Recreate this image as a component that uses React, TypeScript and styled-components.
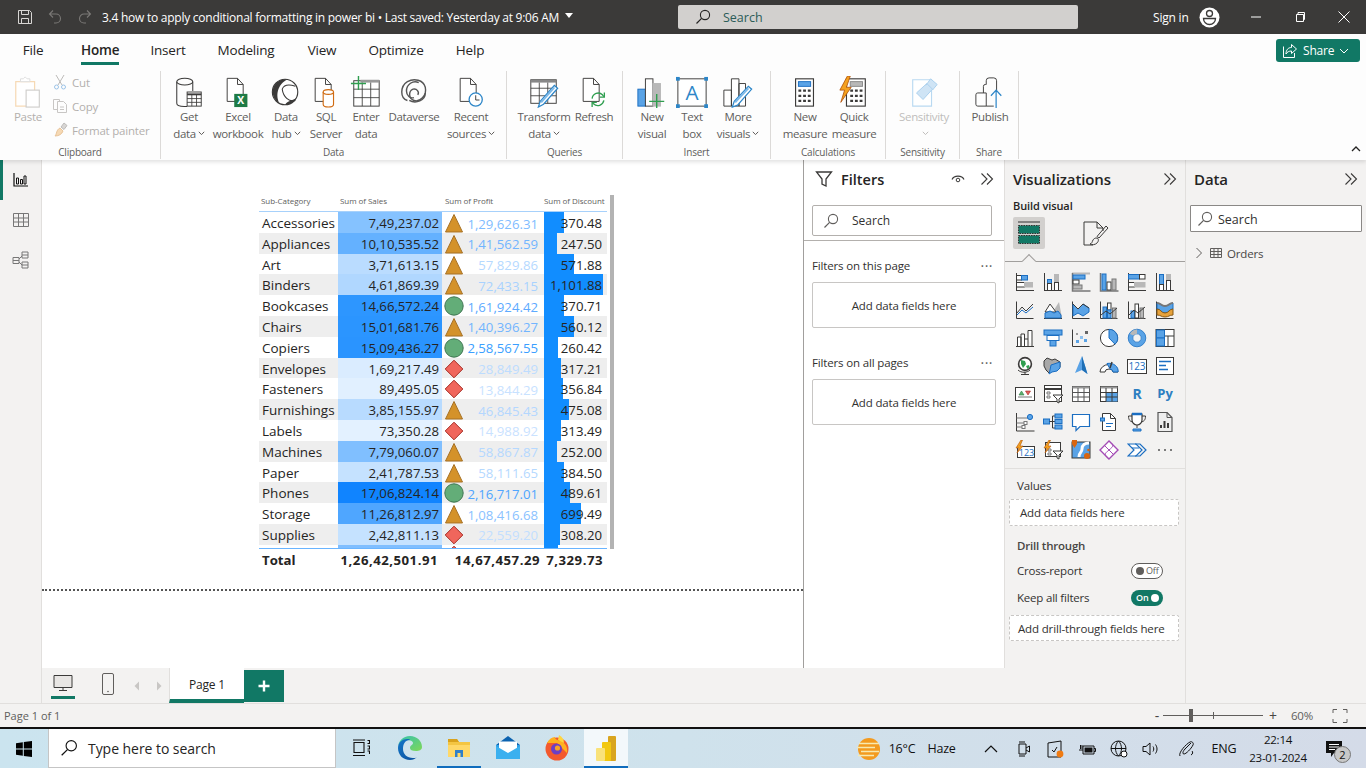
import React from 'react';
import styled, { createGlobalStyle } from 'styled-components';

const FONT = '"Open Sans", "Noto Sans", sans-serif';
const GREEN = '#117865';
const INK = '#3b3a39';
const BLUE = '#5aa3e6';
const BLUE_D = '#1b6ec2';
const GREY = '#b8b8b8';

const GlobalStyle = createGlobalStyle`
  html, body { margin: 0; padding: 0; width: 1366px; height: 768px; overflow: hidden; background: #f3f2f1; }
  * { box-sizing: border-box; }
  body { font-family: ${FONT}; color: #252423; }
`;

type Row = { name: string; sales: string; salesBg: string; mark: 'tri' | 'dot' | 'dia'; profit: string; profitFg: string; discount: number };

const ROWS: Row[] = [
  { name: 'Accessories', sales: '7,49,237.02', salesBg: '#85c2ff', mark: 'tri', profit: '1,29,626.31', profitFg: '#7fbcff', discount: 370.48 },
  { name: 'Appliances', sales: '10,10,535.52', salesBg: '#64b1ff', mark: 'tri', profit: '1,41,562.59', profitFg: '#72b5ff', discount: 247.5 },
  { name: 'Art', sales: '3,71,613.15', salesBg: '#badcff', mark: 'tri', profit: '57,829.86', profitFg: '#b5d9ff', discount: 571.88 },
  { name: 'Binders', sales: '4,61,869.39', salesBg: '#b0d7ff', mark: 'tri', profit: '72,433.15', profitFg: '#a8d2ff', discount: 1101.88 },
  { name: 'Bookcases', sales: '14,66,572.24', salesBg: '#2d96ff', mark: 'dot', profit: '1,61,924.42', profitFg: '#5daaff', discount: 370.71 },
  { name: 'Chairs', sales: '15,01,681.76', salesBg: '#2b95ff', mark: 'tri', profit: '1,40,396.27', profitFg: '#72b5ff', discount: 560.12 },
  { name: 'Copiers', sales: '15,09,436.27', salesBg: '#2a94ff', mark: 'dot', profit: '2,58,567.55', profitFg: '#3b9fff', discount: 260.42 },
  { name: 'Envelopes', sales: '1,69,217.49', salesBg: '#daecff', mark: 'dia', profit: '28,849.49', profitFg: '#bddcff', discount: 317.21 },
  { name: 'Fasteners', sales: '89,495.05', salesBg: '#e1f0ff', mark: 'dia', profit: '13,844.29', profitFg: '#c8e2ff', discount: 356.84 },
  { name: 'Furnishings', sales: '3,85,155.97', salesBg: '#b8dbff', mark: 'tri', profit: '46,845.43', profitFg: '#b4d7ff', discount: 475.08 },
  { name: 'Labels', sales: '73,350.28', salesBg: '#e3f1ff', mark: 'dia', profit: '14,988.92', profitFg: '#c9e2ff', discount: 313.49 },
  { name: 'Machines', sales: '7,79,060.07', salesBg: '#80bfff', mark: 'tri', profit: '58,867.87', profitFg: '#b5d8ff', discount: 252 },
  { name: 'Paper', sales: '2,41,787.53', salesBg: '#c5e2ff', mark: 'tri', profit: '58,111.65', profitFg: '#b5d9ff', discount: 384.5 },
  { name: 'Phones', sales: '17,06,824.14', salesBg: '#1084ff', mark: 'dot', profit: '2,16,717.01', profitFg: '#4fa5ff', discount: 489.61 },
  { name: 'Storage', sales: '11,26,812.97', salesBg: '#4fa6ff', mark: 'tri', profit: '1,08,416.68', profitFg: '#8ac2ff', discount: 699.49 },
  { name: 'Supplies', sales: '2,42,811.13', salesBg: '#c5e2ff', mark: 'dia', profit: '22,559.20', profitFg: '#c2deff', discount: 308.2 },
  // the row under the fold: only its top edge peeks out above the total line
  { name: '', sales: '', salesBg: '#7fbeff', mark: 'dia', profit: '', profitFg: '#c2deff', discount: 258 },
];

const MAX_DISCOUNT = 1101.88;
const BAR_MAX = 58.5;

/* ---------- small svg helpers ---------- */

const Svg = ({ s = 20, vb = '0 0 20 20', children }: { s?: number; vb?: string; children: React.ReactNode }) => (
  <svg width={s} height={s} viewBox={vb} fill="none" style={{ display: 'block', flex: 'none' }}>
    {children}
  </svg>
);

const Chevrons = () => (
  <Svg s={16} vb="0 0 16 16">
    <path d="M2.5 2.5 8 8l-5.5 5.5M8 2.5 13.5 8 8 13.5" stroke={INK} strokeWidth="1.1" />
  </Svg>
);

const Magnifier = ({ color = INK }: { color?: string }) => (
  <Svg s={16} vb="0 0 16 16">
    <circle cx="10" cy="6" r="4.6" stroke={color} strokeWidth="1.1" />
    <path d="M6.6 9.4 1.5 14.5" stroke={color} strokeWidth="1.2" />
  </Svg>
);

const Axes = () => <path d="M1.5 1.5v17h17" stroke={INK} strokeWidth="1" />;

const VIZ_ICONS: React.ReactNode[] = [
  <><path d="M1.5 1v18M1 18.5h18" stroke={INK} /><rect x="1.5" y="3.5" width="5" height="4.5" fill="#fff" stroke={INK} /><rect x="6.5" y="3.5" width="6" height="4.5" fill={BLUE} stroke={BLUE_D} /><rect x="1.5" y="10.5" width="8" height="4.5" fill="#fff" stroke={INK} /><rect x="9.5" y="10.5" width="8" height="4.5" fill={GREY} stroke={GREY} /></>,
  <><path d="M1.5 1v18M1 18.5h18" stroke={INK} /><rect x="4.5" y="7.5" width="4" height="4" fill={BLUE} stroke={BLUE_D} /><rect x="4.5" y="11.5" width="4" height="7" fill="#fff" stroke={INK} /><rect x="11.5" y="2.5" width="4" height="8" fill={GREY} stroke={GREY} /><rect x="11.5" y="10.5" width="4" height="8" fill="#fff" stroke={INK} /></>,
  <><path d="M1 1.5h18" stroke={GREY} strokeWidth="2" /><path d="M1.5 1v18h18" stroke="#777" strokeWidth="1.5" /><rect x="2" y="3" width="12" height="4" fill={BLUE} stroke={BLUE_D} /><rect x="2" y="8" width="6" height="4" fill="#fff" stroke={INK} /><rect x="2" y="13" width="9" height="4" fill={GREY} stroke="#777" /></>,
  <><path d="M1.5 1v18h18" stroke="#777" strokeWidth="1.5" /><rect x="3" y="2" width="4" height="16" fill={BLUE} stroke={BLUE_D} /><rect x="8" y="10" width="4" height="8" fill="#fff" stroke={INK} /><rect x="13" y="7" width="4" height="11" fill={GREY} stroke="#777" /></>,
  <><path d="M1.5 1v18M1 18.5h18" stroke={INK} /><rect x="1.5" y="2.5" width="11" height="4.5" fill={BLUE} stroke={BLUE_D} /><rect x="12.5" y="2.5" width="5.5" height="4.5" fill="#fff" stroke={INK} /><rect x="1.5" y="10.5" width="6" height="4.5" fill="#fff" stroke={INK} /><rect x="7.5" y="10.5" width="10.5" height="4.5" fill={GREY} stroke={GREY} /></>,
  <><path d="M1.5 1v18M1 18.5h18" stroke={INK} /><rect x="4.5" y="2.5" width="4" height="10" fill={BLUE} stroke={BLUE_D} /><rect x="4.5" y="12.5" width="4" height="6" fill="#fff" stroke={INK} /><rect x="11.5" y="2.5" width="4" height="6" fill={GREY} stroke={GREY} /><rect x="11.5" y="8.5" width="4" height="10" fill="#fff" stroke={INK} /></>,

  <><Axes /><path d="M2 13 7 7l4 4 7-7" stroke={INK} /><path d="M2 15l5-5 4 3 7-6" stroke={BLUE_D} /></>,
  <><path d="M1 18.5h18" stroke={INK} /><path d="M11 10l5-8 3 16h-8z" fill={GREY} /><path d="M2 12l5-8 6 8z" fill="#fff" stroke={INK} /><path d="M2 18v-5l5-2 4 2 4-2 3 4v3z" fill={BLUE} stroke={BLUE_D} /></>,
  <><Axes /><path d="M2 4l5 5 5-5 6 4v4l-6 4-5-3-5 3z" fill={BLUE} stroke={BLUE_D} /><path d="M2 4l5 5 5-5 6 4" stroke={INK} /></>,
  <><Axes /><rect x="4" y="7" width="3.5" height="11" fill={BLUE} stroke={BLUE_D} /><rect x="8.5" y="3" width="3.5" height="7" fill="#fff" stroke={INK} /><rect x="8.5" y="10" width="3.5" height="8" fill={BLUE} stroke={BLUE_D} /><rect x="13.5" y="8" width="3.5" height="10" fill={GREY} stroke="#777" /><path d="M2 15l5-4 4 3 7-6" stroke={INK} /></>,
  <><Axes /><rect x="4" y="11" width="3.5" height="7" fill={BLUE} stroke={BLUE_D} /><rect x="8" y="4" width="3.5" height="14" fill="#fff" stroke={INK} /><rect x="13" y="8" width="3.5" height="10" fill={GREY} stroke="#777" /><path d="M2 15l5-5 4 3 7-6" stroke={INK} /></>,
  <><Axes /><path d="M2 3c4 0 4 3 8 3s4-3 8-3v6c-4 0-4 4-8 4s-4-4-8-4z" fill={BLUE} stroke={BLUE_D} /><path d="M2 9c4 0 4 4 8 4s4-4 8-4v6c-4 0-4 2-8 2s-4-2-8-2z" fill="#e6a23c" stroke="#8a5a14" /><path d="M2 3c4 0 4 3 8 3s4-3 8-3" stroke="#777" strokeWidth="2" /></>,

  <><path d="M1 18.5h18" stroke={INK} /><path d="M2.5 18V9H6v9M6 18V6h3.5v12M9.5 18v-7H13v7M13 11V2.5h4V18" stroke={INK} fill="#fff" /></>,
  <><rect x="1" y="2" width="18" height="5" fill={BLUE} stroke={BLUE_D} /><rect x="4" y="7.5" width="12" height="5" fill="#fff" stroke={BLUE_D} /><rect x="7" y="12.5" width="6" height="5.5" fill={BLUE} stroke={BLUE_D} /></>,
  <><Axes /><rect x="5" y="12" width="3" height="3" fill={BLUE} /><rect x="9" y="8" width="3" height="3" fill="#8fc1ee" /><rect x="13" y="11" width="3" height="3" fill={BLUE} /><rect x="14" y="3" width="3" height="3" fill="#666" /><rect x="5" y="5" width="2" height="2" fill="#999" /></>,
  <><circle cx="10" cy="10" r="8.6" fill="#fff" stroke={INK} /><path d="M10 1.400V10l6 6.200A8.600 8.600 0 0 0 10 1.400z" fill={BLUE} stroke={BLUE_D} /></>,
  <><circle cx="10" cy="10" r="6.600" stroke={BLUE} strokeWidth="4.400" /><circle cx="10" cy="10" r="8.800" stroke={BLUE_D} strokeWidth=".8" /><circle cx="10" cy="10" r="4.200" stroke={BLUE_D} strokeWidth=".8" /><path d="M3 6a8 8 0 0 1 7-4.400v4.200A4.200 4.200 0 0 0 6.500 7.600z" fill={GREY} /></>,
  <><rect x="1" y="1.500" width="18" height="17" fill="#fff" stroke={INK} /><rect x="1.500" y="2" width="8" height="8" fill={BLUE} stroke={BLUE_D} /><rect x="1.500" y="10" width="8" height="8" fill={BLUE} stroke={BLUE_D} /><path d="M10 8h9M13 8v10" stroke={INK} /></>,

  <><circle cx="10" cy="8" r="6.400" fill="#fff" stroke={INK} strokeWidth="1.600" /><path d="M6 4l4 1 1 3-3 4-2-4zM11 10l3-1 .5 2-2 2z" fill="#2f9e4f" /><path d="M3 14c3 3 9 3 12 0M10 16v2M6 18.500h8" stroke={INK} /></>,
  <><path d="M1 5l3-3 5 2 3-1 5 3v5l-3 3-5 1-3 2-3-3-2-4z" fill="#a8a8a8" stroke={INK} /><path d="M8 9l9-3v6l-3 3-5 1-3 2 1-4z" fill={BLUE} stroke={BLUE_D} /></>,
  <><path d="M11 0l5.500 18-5.500-4-7 3z" fill={BLUE} /><path d="M11 0l5.500 18-5.500-4z" fill="#1f6fb5" /></>,
  <><path d="M1 16a9 7.500 0 0 1 18 0h-5a4 3 0 0 0-8 0z" fill="#fff" stroke={INK} /><path d="M8 7.500a9 7.500 0 0 1 11 8.500h-5a4 3 0 0 0-3-3z" fill={BLUE} stroke={BLUE_D} /><path d="M11 12l2-6" stroke={INK} strokeWidth="1.500" /></>,
  <><rect x=".5" y="3.500" width="19" height="14" fill="#fff" stroke={INK} /><text x="10" y="14.300" textAnchor="middle" fontSize="10" fontFamily={FONT} fill={BLUE_D}>123</text></>,
  <><rect x="1.500" y="1.500" width="17" height="17" fill="#fff" stroke={INK} /><path d="M4 5.500h12M4 9.500h7M4 13.500h9" stroke={BLUE_D} strokeWidth="1.600" /></>,

  <><rect x=".5" y="3.500" width="19" height="13" fill="#fff" stroke={INK} /><path d="M4 11l2.500-4L9 11z" fill="#60b070" stroke="#2f7d45" strokeWidth=".6" /><path d="M10.500 7l2.500 4 2.500-4z" fill="#e25c5c" stroke="#a62a22" strokeWidth=".6" /><path d="M3 13h14" stroke="#777" /></>,
  <><rect x="1.500" y="1.500" width="17" height="16" fill="#fff" stroke={INK} /><path d="M1.500 5h17" stroke={INK} strokeWidth="2" /><path d="M4 8h3v2H4zM4 12h3v2H4z" stroke="#777" /><path d="M10 11h10l-4 4v4l-2-1v-3z" fill="#fff" stroke={INK} /></>,
  <><rect x="1.500" y="2.500" width="17" height="15" fill="#fff" stroke="#555" /><path d="M1.500 3.500h17" stroke="#999" strokeWidth="2" /><path d="M1.500 8.500h17M1.500 13h17M7 4v13.500M13 4v13.500" stroke="#555" /></>,
  <><rect x="1.500" y="2.500" width="17" height="15" fill="#fff" stroke={INK} /><path d="M1.500 3.500h17" stroke="#999" strokeWidth="2" /><rect x="7" y="8.500" width="11.500" height="9" fill={BLUE} /><path d="M1.500 8.500h17M1.500 13h17M7 4v13.500M13 4v13.500" stroke={INK} /></>,
  <text x="10" y="15" textAnchor="middle" fontSize="14" fontWeight="700" fontFamily={FONT} fill="#2d7fc1">R</text>,
  <text x="10" y="14" textAnchor="middle" fontSize="13" fontWeight="700" fontFamily={FONT} fill="#2d7fc1">Py</text>,

  <><path d="M1.500 1v18h18" stroke={INK} /><path d="M1.500 6H14M1.500 11H9M1.500 15H7" stroke="#777" /><circle cx="15" cy="5" r="2.600" fill={BLUE} stroke={BLUE_D} /><rect x="9" y="9.500" width="3" height="3" fill="#fff" stroke="#777" /><rect x="7" y="13.500" width="3" height="3" fill="#fff" stroke="#777" /></>,
  <><rect x=".5" y="7" width="6" height="5" fill={BLUE} stroke={BLUE_D} /><path d="M6.500 9.500h3M9.500 4v12M9.500 4H12M9.500 9.500H12M9.500 16H12" stroke={INK} /><rect x="12" y="2" width="7" height="4" fill={BLUE} stroke={BLUE_D} /><rect x="12" y="7.500" width="7" height="4" fill={BLUE} stroke={BLUE_D} /><rect x="12" y="13" width="7" height="4" fill={BLUE} stroke={BLUE_D} /></>,
  <path d="M1.500 2.500h17v12H9L5 18.500v-4H1.500z" fill="#fff" stroke={BLUE_D} strokeWidth="1.200" />,
  <><path d="M3.500 1.500h8l5 5v12h-13z" fill="#fff" stroke={INK} /><path d="M11.500 1.500v5h5" stroke={INK} /><rect x="1.500" y="6" width="4" height="3" fill={BLUE} stroke={BLUE_D} /><path d="M7 11.500h7M7 14.500h5" stroke={BLUE_D} /></>,
  <><path d="M5 2h10v6a5 5 0 0 1-10 0z" fill="#fff" stroke={INK} strokeWidth="1.200" /><path d="M5 2h10" stroke={BLUE_D} strokeWidth="2.500" /><path d="M5 4H1.500c0 4 1.500 5.500 4.500 6M15 4h3.500c0 4-1.500 5.500-4.500 6M10 13v3M6 18h8" stroke={INK} /><path d="M6 17h8v2H6z" fill={BLUE} stroke={BLUE_D} /></>,
  <><path d="M3 .5h9l5 5v14H3z" fill="#eee" stroke="#555" strokeWidth="1.200" /><path d="M12 .5v5h5" stroke="#555" /><path d="M6 16v-3M9.500 16V9M13 16v-5" stroke={INK} strokeWidth="2" /></>,

  <><rect x="2.500" y="6.500" width="17" height="11" fill="#fff" stroke={INK} /><text x="11.500" y="15.500" textAnchor="middle" fontSize="9" fontFamily={FONT} fill={BLUE_D}>123</text><path d="M6 0L1 8h3l-2 5 6-7H5l2.500-6z" fill="#f4a11e" stroke="#b3540c" strokeWidth=".6" /></>,
  <><rect x="2.500" y="2.500" width="15" height="14" fill="#fff" stroke={INK} /><path d="M10 11h10l-4 4v4l-2-1v-3z" fill="#fff" stroke={INK} /><path d="M5 9h3v2H5zM5 13h3v2H5z" stroke="#777" /><path d="M6 0L1 8h3l-2 5 6-7H5l2.500-6z" fill="#f4a11e" stroke="#b3540c" strokeWidth=".6" /></>,
  <><rect x="1" y="2" width="18" height="16" fill={BLUE} stroke={INK} /><path d="M8 17c0-5 3-4 3-8s3-6 7-6" stroke="#fff" strokeWidth="3" /><path d="M1 0h5v4L3.500 8 1 4z" fill="#d8650f" /><circle cx="16" cy="16" r="3" fill="#d8650f" /><circle cx="17.500" cy="10" r="1.300" fill="#d8650f" /></>,
  <><path d="M10 1l9 9-9 9-9-9z" fill="#fff" stroke="#a44bb5" strokeWidth="1.400" /><path d="M10 1c5 4 5 5 0 9-5 4-5 5 0 9M5.500 5.500l9 9" stroke="#a44bb5" /></>,
  <><path d="M1 4h8l6 6-6 6H1l6-6z" fill="#fff" stroke={BLUE_D} strokeWidth="1.200" /><path d="M8 4h5l6 6-6 6H8M5 8h7" stroke={BLUE_D} strokeWidth="1.200" /></>,
  <><circle cx="4" cy="10" r="1" fill="#555" /><circle cx="10" cy="10" r="1" fill="#555" /><circle cx="16" cy="10" r="1" fill="#555" /></>,
];

const Page = ({ children }: { children?: React.ReactNode }) => (
  <>
    <path d="M5.500 2.500h11l6 6.500v18h-17z" fill="#fff" stroke={INK} />
    <path d="M16.500 2.500V9h6" stroke={INK} />
    {children}
  </>
);

const RIBBON_ICONS: Record<string, React.ReactNode> = {
  paste: <><rect x="4" y="6" width="20" height="26" fill="#fff" stroke="#f6d9b4" strokeWidth="1.300" /><path d="M9 6V3h3l2-2 2 2h3v3z" fill="#fff" stroke="#ddd" /><rect x="15" y="15" width="14" height="18" fill="#fff" stroke="#cfcdcb" strokeWidth="1.200" /></>,
  getData: <><path d="M4 6v23c0 2 3 3.500 8 3.500h3M21 6v10" stroke={INK} strokeWidth="1.100" /><ellipse cx="12.500" cy="6" rx="8.500" ry="3.500" stroke={INK} strokeWidth="1.100" /><rect x="15" y="17" width="15" height="15" fill="#fff" stroke={INK} /><path d="M15 19.500h15" stroke={INK} strokeWidth="2" /><path d="M15 24h15M15 28h15M20 20v12M25 20v12" stroke={INK} strokeWidth=".9" /></>,
  excel: <><Page /><rect x="13" y="19" width="14" height="14" fill="#1e7b45" /><text x="20" y="30" textAnchor="middle" fontSize="11" fontWeight="700" fontFamily={FONT} fill="#fff">X</text></>,
  hub: <><circle cx="16" cy="17" r="13.500" fill="#fff" stroke={INK} strokeWidth="1.200" /><path d="M16 3.500a13.500 13.500 0 0 0-6 25.500c-4-7-3-20 9-25.500z" fill={INK} /><path d="M27 26C20 28 14 22 13 14c2-5 8-5 14-3" stroke={INK} strokeWidth="1.100" fill="none" /><path d="M16 30.500a13.500 13.500 0 0 0 12-7c-5 3-9 3-12 7z" fill={INK} /></>,
  sql: <><Page /><path d="M14 17v13c0 1.500 2 3 5.500 3s5.500-1.500 5.500-3V17" fill="#fff" stroke="#d06b12" strokeWidth="1.200" /><ellipse cx="19.500" cy="17" rx="5.500" ry="2.500" fill="#fff" stroke="#d06b12" strokeWidth="1.200" /></>,
  enter: <><rect x="4" y="5" width="27" height="27" fill="#fff" stroke={INK} /><path d="M11 5.500h20" stroke="#999" strokeWidth="3" /><path d="M4 14h27M4 23h27M13 7v25M22 7v25" stroke={INK} strokeWidth=".9" /><path d="M9 0v15M1 8h16" stroke="#2f9e4f" strokeWidth="1.500" /></>,
  dataverse: <><path d="M10 26C2 24 2 11 10 6c7-4 17-2 19 6 2 9-6 16-12 14-6-2-6-10-1-12 4-1 7 3 5 6" stroke="#555" strokeWidth="1.500" /><path d="M22 7c-6-3-13 2-13 9 0 5 4 8 8 7M29 18c0 8-10 12-17 8" stroke="#555" strokeWidth="1.500" /></>,
  recent: <><Page /><circle cx="22" cy="25" r="7" fill="#fff" stroke="#2d86c8" strokeWidth="1.400" /><path d="M22 20.500v5h4" stroke={INK} /></>,
  transform: <><rect x="3" y="4" width="27" height="25" fill="#fff" stroke={INK} /><path d="M3 5.500h27" stroke="#888" strokeWidth="3" /><path d="M3 13h27M3 21h27M12 7v22M21 7v22" stroke={INK} strokeWidth=".9" /><path d="M11 33l2-6 15-17 3.500 3-15 17z" fill="#fff" stroke="#2d86c8" strokeWidth="1.300" /><path d="M14 28l14-16" stroke="#7db9e8" strokeWidth="2" /></>,
  refresh: <><Page /><path d="M15 24a6.500 6.500 0 0 1 11-4l1.500 2M27.500 26a6.500 6.500 0 0 1-11 3.500L15 28" stroke="#2f9e4f" strokeWidth="1.400" /><path d="M28 17.500v5h-5M15 33v-5h5" stroke="#2f9e4f" strokeWidth="1.400" /></>,
  newVisual: <><rect x="2" y="14" width="8" height="18" fill={BLUE} stroke={BLUE_D} /><rect x="10" y="3" width="8" height="29" fill="#fff" stroke={INK} /><rect x="18" y="8" width="8" height="24" fill={GREY} stroke={GREY} /><path d="M22 19v16M14 27h16" stroke="#2f9e4f" strokeWidth="1.500" /></>,
  textBox: <><rect x="2" y="3" width="30" height="29" fill="#fff" stroke={INK} /><text x="17" y="26" textAnchor="middle" fontSize="22" fontFamily={FONT} fill="#2d86c8">A</text><rect x="0" y="1" width="4" height="4" fill="#2d86c8" /><rect x="30" y="1" width="4" height="4" fill="#2d86c8" /><rect x="0" y="30" width="4" height="4" fill="#2d86c8" /><rect x="30" y="30" width="4" height="4" fill="#2d86c8" /></>,
  moreVisuals: <><path d="M2 15h8v17H2zM10 3h8v29h-8zM18 8h7v24h-7z" fill="#fff" stroke={INK} /><path d="M11 33l2-6 15-16 3.500 3-15 17z" fill="#fff" stroke="#2d86c8" strokeWidth="1.300" /><path d="M14 28l14-15" stroke="#7db9e8" strokeWidth="2" /></>,
  measure: <><rect x="7" y="3" width="19" height="29" fill="#fff" stroke={INK} strokeWidth="1.200" /><rect x="10" y="6" width="13" height="5" fill={BLUE} stroke={BLUE_D} /><path d="M10 15.500h3M15 15.500h3M20 15.500h3M10 21h3M15 21h3M20 21h3M10 26.500h3M15 26.500h3M20 26.500h3" stroke={INK} strokeWidth="2.400" /></>,
  quick: <><rect x="9" y="3" width="20" height="29" fill="#fff" stroke={INK} strokeWidth="1.200" /><rect x="13" y="6" width="13" height="5" fill={GREY} stroke="#888" /><path d="M13 15.500h3M18 15.500h3M23 15.500h3M13 21h3M18 21h3M23 21h3M13 26.500h3M18 26.500h3M23 26.500h3" stroke={INK} strokeWidth="2.400" /><path d="M10 0 2 15h5L3 28l11-16H9l4-12z" fill="#f4a11e" stroke="#b3540c" strokeWidth=".9" /></>,
  sensitivity: <><path d="M5 4h20v28H5z" fill="#fff" stroke="#b9d9f1" strokeWidth="1.200" /><path d="M9 18 20 8l6 6-10 11zM19 10l5-7 7 6-5 6" fill="#cfe4f5" stroke="#a9cfed" /></>,
  publish: <><path d="M2 20a2 2 0 0 1 2-2h9v14H4a2 2 0 0 1-2-2z" fill="#fff" stroke={INK} /><path d="M10 18v-7a2 2 0 0 1 2-2h1V5a3 3 0 0 1 3-3h5a3 3 0 0 1 3 3v12" stroke={INK} /><path d="M13 32h8" stroke={INK} /><path d="M23.500 34V15M18 21l5.500-6 5.500 6" stroke="#2d86c8" strokeWidth="1.300" /></>,
};

const Icon32 = ({ name }: { name: string }) => (
  <Svg s={32} vb="0 0 34 34">
    {RIBBON_ICONS[name]}
  </Svg>
);

/* ---------- data for the ribbon ---------- */

type Item = { icon: string; w: number; l1: string; l2?: string; more?: boolean; off?: boolean };

const GROUPS: { label: string; w: number; pl: number; items: Item[] }[] = [
  { label: 'Data', w: 346, pl: 4, items: [
    { icon: 'getData', w: 48, l1: 'Get', l2: 'data', more: true },
    { icon: 'excel', w: 50, l1: 'Excel', l2: 'workbook' },
    { icon: 'hub', w: 46, l1: 'Data', l2: 'hub', more: true },
    { icon: 'sql', w: 34, l1: 'SQL', l2: 'Server' },
    { icon: 'enter', w: 46, l1: 'Enter', l2: 'data' },
    { icon: 'dataverse', w: 50, l1: 'Dataverse' },
    { icon: 'recent', w: 64, l1: 'Recent', l2: 'sources', more: true },
  ] },
  { label: 'Queries', w: 116, pl: 9, items: [
    { icon: 'transform', w: 56, l1: 'Transform', l2: 'data', more: true },
    { icon: 'refresh', w: 44, l1: 'Refresh' },
  ] },
  { label: 'Insert', w: 148, pl: 9, items: [
    { icon: 'newVisual', w: 40, l1: 'New', l2: 'visual' },
    { icon: 'textBox', w: 40, l1: 'Text', l2: 'box' },
    { icon: 'moreVisuals', w: 52, l1: 'More', l2: 'visuals', more: true },
  ] },
  { label: 'Calculations', w: 115, pl: 9, items: [
    { icon: 'measure', w: 50, l1: 'New', l2: 'measure' },
    { icon: 'quick', w: 48, l1: 'Quick', l2: 'measure' },
  ] },
  { label: 'Sensitivity', w: 74, pl: 3, items: [
    { icon: 'sensitivity', w: 70, l1: 'Sensitivity', more: true, off: true },
  ] },
  { label: 'Share', w: 59, pl: 4, items: [
    { icon: 'publish', w: 52, l1: 'Publish' },
  ] },
];

const Caret = () => (
  <svg width="7" height="5" viewBox="0 0 7 5" fill="none" style={{ marginLeft: 2 }}>
    <path d="M.8.8 3.500 3.600 6.200.8" stroke="currentColor" strokeWidth="1" />
  </svg>
);

const Mark = ({ kind }: { kind: Row['mark'] }) => {
  if (kind === 'tri') {
    return <Svg s={20}><path d="M10 1.500 18.500 19h-17z" fill="#d4922a" stroke="#a67125" /></Svg>;
  }
  if (kind === 'dot') {
    return <Svg s={20}><circle cx="10" cy="10" r="9.200" fill="#63ad78" stroke="#3f7552" /></Svg>;
  }
  return <Svg s={20}><path d="M10 1.200 18.800 10 10 18.800 1.200 10z" fill="#f0665c" stroke="#a62a22" /></Svg>;
};

const App = () => {
  return (
    <>
      <GlobalStyle />
      <Shell>
        <TitleBar>
          <TitleLeft>
            <Svg s={16} vb="0 0 16 16">
              <path d="M1.500 1.500h11l2 2v11h-13z" stroke="#d8d6d4" />
              <path d="M4.500 1.500v4h7v-4M4.500 14.500v-5h7v5" stroke="#d8d6d4" />
            </Svg>
            <TitleGhost>
              <Svg s={16} vb="0 0 16 16"><path d="M6 1.500 2.500 5 6 8.500M3 5h6a4.500 4.500 0 0 1 0 9H7" stroke="#7a7876" strokeWidth="1.100" /></Svg>
            </TitleGhost>
            <TitleGhost>
              <Svg s={16} vb="0 0 16 16"><path d="M10 1.500 13.500 5 10 8.500M13 5H7a4.500 4.500 0 0 0 0 9h2" stroke="#7a7876" strokeWidth="1.100" /></Svg>
            </TitleGhost>
            <DocTitle>3.4 how to apply conditional formatting in power bi • Last saved: Yesterday at 9:06 AM</DocTitle>
            <TitleCaret />
          </TitleLeft>
          <TitleSearch>
            <Magnifier color="#252423" />
            <span>Search</span>
          </TitleSearch>
          <TitleRight>
            <SignIn>Sign in</SignIn>
            <Svg s={21} vb="0 0 21 21">
              <circle cx="10.500" cy="10.500" r="10" fill="#fff" />
              <circle cx="10.500" cy="6.500" r="3" stroke={INK} strokeWidth="1.300" />
              <path d="M4.500 11.500h12a6 6 0 0 1-12 0z" stroke={INK} strokeWidth="1.300" />
            </Svg>
            <WinButton $ml={30}><Svg s={12} vb="0 0 12 12"><path d="M1 6h10" stroke="#fff" /></Svg></WinButton>
            <WinButton $ml={32}><Svg s={12} vb="0 0 12 12"><path d="M2.500 3.500h7v7h-7zM4 3.500v-2h6.500v7h-1" stroke="#fff" /></Svg></WinButton>
            <WinButton $ml={32}><Svg s={12} vb="0 0 12 12"><path d="m.5.500 11 11m0-11-11 11" stroke="#fff" /></Svg></WinButton>
          </TitleRight>
        </TitleBar>

        <Ribbon>
          <TabsRow>
            <Tab $w={44} $ml={11}>File</Tab>
            <Tab $w={38} $ml={26} $active>Home</Tab>
            <Tab $w={36} $ml={31}>Insert</Tab>
            <Tab $w={60} $ml={30}>Modeling</Tab>
            <Tab $w={32} $ml={30}>View</Tab>
            <Tab $w={58} $ml={29}>Optimize</Tab>
            <Tab $w={30} $ml={30}>Help</Tab>
            <ShareButton>
              <Svg s={16} vb="0 0 16 16">
                <path d="M1.500 3.500v11h11V10" stroke="#fff" />
                <path d="M9.500 1.500 14.500 6l-5 4.500V8C7 8 5 9 4 11c0-4 2-6.500 5.500-6.500z" stroke="#fff" />
              </Svg>
              <span>Share</span>
              <Svg s={10} vb="0 0 10 10"><path d="m1 3 4 4 4-4" stroke="#fff" /></Svg>
            </ShareButton>
          </TabsRow>
          <Groups>
            <RibbonGroup $w={161} $pl={0}>
              <GroupItems>
                <PasteButton>
                  <Icon32 name="paste" />
                  <span>Paste</span>
                </PasteButton>
                <ClipList>
                  <ClipRow>
                    <Svg s={16} vb="0 0 16 16"><path d="M4 1l6 10M12 1 6 11" stroke="#bdbbb9" /><circle cx="4.500" cy="13" r="2" stroke="#9cc4e8" /><circle cx="11.500" cy="13" r="2" stroke="#9cc4e8" /></Svg>
                    Cut
                  </ClipRow>
                  <ClipRow>
                    <Svg s={16} vb="0 0 16 16"><path d="M5.500 3.500h6l3 3v8h-9zM5 11.500H1.500v-10h6v2M8 9h4M8 11.500h4" stroke="#c8c6c4" /></Svg>
                    Copy
                  </ClipRow>
                  <ClipRow>
                    <Svg s={16} vb="0 0 16 16"><path d="m8 6 3 3c-1 3-4 5-8 5 2-2 1-6 5-8z" fill="#f6d9b4" stroke="#e8c49a" /><path d="m9 5 3-4 3 2.500-3 4z" fill="#d8d6d4" stroke="#bdbbb9" /></Svg>
                    Format painter
                  </ClipRow>
                </ClipList>
              </GroupItems>
              <GroupLabel $pl={0}>Clipboard</GroupLabel>
            </RibbonGroup>
            {GROUPS.map((g) => (
              <RibbonGroup key={g.label} $w={g.w} $pl={g.pl}>
                <GroupItems>
                  {g.items.map((it) => (
                    <RibbonItem key={it.icon} $w={it.w} $off={it.off}>
                      <Icon32 name={it.icon} />
                      <ItemLabel>
                        <span>{it.l1}</span>
                        <span>
                          {it.l2}
                          {it.more && <Caret />}
                        </span>
                      </ItemLabel>
                    </RibbonItem>
                  ))}
                </GroupItems>
                <GroupLabel $pl={g.pl}>{g.label}</GroupLabel>
              </RibbonGroup>
            ))}
            <Collapse>
              <Svg s={10} vb="0 0 10 10"><path d="m1 7 4-4 4 4" stroke="#252423" strokeWidth="1.300" /></Svg>
            </Collapse>
          </Groups>
        </Ribbon>

        <Main>
          <NavRail>
            <NavItem $active>
              <Svg s={16} vb="0 0 16 16"><path d="M1 1v13h14" stroke="#111" strokeWidth="1.200" /><path d="M3.500 6h2v6h-2zM7.500 7.500h2V12h-2zM11 4h2v8h-2z" stroke="#111" /></Svg>
            </NavItem>
            <NavItem>
              <Svg s={16} vb="0 0 16 16"><path d="M.5 1.500h15v13H.5zM.5 6h15M.5 10h15M5.500 1.500v13M10.500 1.500v13" stroke="#777" /></Svg>
            </NavItem>
            <NavItem>
              <Svg s={18} vb="0 0 18 18"><path d="M1 6.500h6v6H1zM1 9.500h6M10 1h6v6h-6zM10 4h6M10 11h6v6h-6zM10 14h6M7 8l3-3M7 11l3 3" stroke="#777" /></Svg>
            </NavItem>
          </NavRail>

          <Center>
            <Workspace>
              <Canvas>
                <ReportPage>
                  <TableVisual>
                    <Table>
                      <HeaderRow>
                        <HeadCell>Sub-Category</HeadCell>
                        <HeadCell>Sum of Sales</HeadCell>
                        <HeadCell>Sum of Profit</HeadCell>
                        <HeadCell>Sum of Discount</HeadCell>
                      </HeaderRow>
                      <TableBody>
                        {ROWS.map((r, i) => (
                          <DataRow key={i} $odd={i % 2 === 1}>
                            <NameCell>{r.name}</NameCell>
                            <SalesCell $bg={r.salesBg}>{r.sales}</SalesCell>
                            <ProfitCell $fg={r.profitFg}>
                              <Mark kind={r.mark} />
                              <span>{r.profit}</span>
                            </ProfitCell>
                            <DiscountCell>
                              <DiscountBar style={{ width: (r.discount / MAX_DISCOUNT) * BAR_MAX }} />
                              {r.name && (
                                <DiscountValue>{r.discount.toLocaleString('en-US', { minimumFractionDigits: 2 })}</DiscountValue>
                              )}
                            </DiscountCell>
                          </DataRow>
                        ))}
                      </TableBody>
                      <TotalRow>
                        <TotalCell $left>Total</TotalCell>
                        <TotalCell>1,26,42,501.91</TotalCell>
                        <TotalCell>14,67,457.29</TotalCell>
                        <TotalCell>7,329.73</TotalCell>
                      </TotalRow>
                    </Table>
                    <ScrollBar />
                  </TableVisual>
                </ReportPage>
              </Canvas>

              <FiltersPanel>
                <PanelHead>
                  <Svg s={18} vb="0 0 18 18"><path d="M1.500 2h15L11 9v7l-4-2V9z" stroke={INK} strokeWidth="1.300" /></Svg>
                  <FilterTitle>Filters</FilterTitle>
                  <HeadIcons>
                    <Svg s={14} vb="0 0 14 14"><path d="M1 7.500C3 3 11 3 13 7.500" stroke={INK} strokeWidth="1.100" /><circle cx="7" cy="8" r="1.800" stroke={INK} /></Svg>
                    <Chevrons />
                  </HeadIcons>
                </PanelHead>
                <FilterSearch>
                  <Magnifier color="#605e5c" />
                  <span>Search</span>
                </FilterSearch>
                <FilterDivider />
                <FilterSection>
                  <FilterLabel>
                    <span>Filters on this page</span>
                    <Dots>···</Dots>
                  </FilterLabel>
                  <DropBox>Add data fields here</DropBox>
                </FilterSection>
                <FilterSection>
                  <FilterLabel>
                    <span>Filters on all pages</span>
                    <Dots>···</Dots>
                  </FilterLabel>
                  <DropBox>Add data fields here</DropBox>
                </FilterSection>
              </FiltersPanel>
            </Workspace>

            <PageTabs>
              <ViewIcon $active>
                <Svg s={20} vb="0 0 20 20"><path d="M10 14.500v3M6 17.500h8" stroke={INK} /><path d="M1 2.500h18v12H1z" fill="#e8e6e4" stroke={INK} /></Svg>
              </ViewIcon>
              <ViewIcon>
                <Svg s={22} vb="0 0 22 22"><rect x="5.500" y=".5" width="11" height="21" rx="1.500" stroke="#605e5c" /><circle cx="11" cy="18.500" r=".8" fill="#605e5c" /></Svg>
              </ViewIcon>
              <PageArrows>
                <Svg s={10} vb="0 0 10 10"><path d="M7 .5v9L2.500 5z" fill="#c8c6c4" /></Svg>
                <Svg s={10} vb="0 0 10 10"><path d="M3 .5v9L7.500 5z" fill="#c8c6c4" /></Svg>
              </PageArrows>
              <PageTab>Page 1</PageTab>
              <AddPage>
                <Svg s={12} vb="0 0 12 12"><path d="M6 .5v11M.5 6h11" stroke="#fff" strokeWidth="2.400" /></Svg>
              </AddPage>
            </PageTabs>
          </Center>

          <VizPanel>
            <PaneTitle>
              Visualizations
              <Chevrons />
            </PaneTitle>
            <BuildLabel>Build visual</BuildLabel>
            <BuildTabs>
              <BuildTab $active>
                <Svg s={28} vb="0 0 28 28">
                  <path d="M3 3h22" stroke="#333" />
                  <rect x="3.500" y="6.500" width="21" height="8" fill={GREEN} stroke="#333" strokeDasharray="1.500 1" />
                  <rect x="3.500" y="16.500" width="21" height="8" fill={GREEN} stroke="#333" strokeDasharray="1.500 1" />
                </Svg>
              </BuildTab>
              <BuildTab>
                <Svg s={28} vb="0 0 28 28">
                  <path d="M12 26H3V3h13l6 6v3M16 3v6h6" stroke={INK} />
                  <path d="m27 9-9 10-2-1.500L25 7zM15 19c3 0 3 3 1 5s-5 2-7 1c2-.5 2-2 3-4 .5-1 2-2 3-2z" stroke={INK} />
                </Svg>
              </BuildTab>
            </BuildTabs>
            <NotchLine />
            <VizGrid>
              {VIZ_ICONS.map((icon, i) => (
                <VizCell key={i}>
                  <Svg s={20}>{icon}</Svg>
                </VizCell>
              ))}
            </VizGrid>
            <VizDivider />
            <WellLabel>Values</WellLabel>
            <DashedBox $h={27} $pl={10}>Add data fields here</DashedBox>
            <DrillLabel>Drill through</DrillLabel>
            <ToggleRow>
              <span>Cross-report</span>
              <ToggleOff>
                <Knob $dark />
                <span>Off</span>
              </ToggleOff>
            </ToggleRow>
            <ToggleRow>
              <span>Keep all filters</span>
              <ToggleOn>
                <span>On</span>
                <Knob />
              </ToggleOn>
            </ToggleRow>
            <DashedBox $h={26} $pl={8} $mt={4}>Add drill-through fields here</DashedBox>
          </VizPanel>

          <DataPanel>
            <PaneTitle>
              Data
              <Chevrons />
            </PaneTitle>
            <DataSearch>
              <Magnifier color="#605e5c" />
              <span>Search</span>
            </DataSearch>
            <TreeRow>
              <Svg s={12} vb="0 0 12 12"><path d="m3.500 1 5 5-5 5" stroke="#605e5c" /></Svg>
              <Svg s={12} vb="0 0 12 12"><path d="M.5 1.500h11v9H.5zM.5 4.500h11M.5 7.500h11M4 1.500v9M8 1.500v9" stroke="#605e5c" /></Svg>
              <span>Orders</span>
            </TreeRow>
          </DataPanel>
        </Main>

        <StatusBar>
          <span>Page 1 of 1</span>
          <ZoomArea>
            <ZoomSign>-</ZoomSign>
            <ZoomTrack>
              <ZoomTick />
              <ZoomThumb />
            </ZoomTrack>
            <ZoomSign>+</ZoomSign>
            <ZoomValue>60%</ZoomValue>
            <Svg s={16} vb="0 0 16 16"><path d="M1 5V1.500h4M11 1.500h4V5M15 11v3.500h-4M5 14.500H1V11" stroke="#605e5c" /></Svg>
          </ZoomArea>
        </StatusBar>

        <Taskbar>
          <StartButton>
            <Svg s={18} vb="0 0 18 18"><path d="M1 3.200 7.800 2.200v6.300H1zM8.800 2 17 1v7.500H8.800zM1 9.500h6.800v6.300L1 14.800zM8.800 9.500H17V17l-8.200-1.100z" fill="#000" /></Svg>
          </StartButton>
          <TaskSearch>
            <Svg s={18} vb="0 0 16 16"><circle cx="10" cy="6" r="4.600" stroke="#111" strokeWidth="1" /><path d="M6.600 9.400 1.500 14.500" stroke="#111" strokeWidth="1.100" /></Svg>
            <span>Type here to search</span>
          </TaskSearch>
          <TaskApp>
            <Svg s={18} vb="0 0 18 18"><path d="M2 3.500h10v10H2zM1 1h12M1 16.500h12M15.500 1.500h2v3h-2M15.500 7h2v3h-2M15.500 12h2v3" stroke="#111" strokeWidth="1.100" /></Svg>
          </TaskApp>
          <TaskApp>
            <Svg s={26} vb="0 0 26 26">
              <defs>
                <linearGradient id="edgeA" x1="0" y1="0" x2="1" y2="1"><stop offset="0" stopColor="#35c1b0" /><stop offset="1" stopColor="#7fd857" /></linearGradient>
                <linearGradient id="edgeB" x1="0" y1="0" x2="1" y2="1"><stop offset="0" stopColor="#1477c8" /><stop offset="1" stopColor="#0b4f9c" /></linearGradient>
              </defs>
              <path d="M1 13C1 6 6 1 13 1s12 5 12 11c0 3-3 4-6 4-4 0-6-1-6-3 0-3 3-3 3-5 0-2-3-3-6-3C7 5 1 7 1 13z" fill="url(#edgeA)" />
              <path d="M1 13c0-6 5-9 9-9 2 0 3 .5 3 1-5 0-7 4-7 9 0 5 4 9 10 9 2 0 3 0 4-1-2 2-4 3-7 3C6 25 1 20 1 13z" fill="url(#edgeB)" />
            </Svg>
          </TaskApp>
          <TaskApp $underline>
            <Svg s={24} vb="0 0 24 24">
              <path d="M1 3h9l2 3h11v15H1z" fill="#f4c542" />
              <path d="M1 3h9l2 3H1z" fill="#d9a21c" />
              <path d="M1 9h22v12H1z" fill="#ffd868" />
              <path d="M8 14h8v7h-2.500v-4h-3v4H8z" fill="#2f7fc9" />
            </Svg>
          </TaskApp>
          <TaskApp>
            <Svg s={26} vb="0 0 26 26">
              <path d="M1 10 13 1l12 9v14H1z" fill="#0c63b0" />
              <path d="M1 10h24v14H1z" fill="#2d9fe6" />
              <path d="M4 6.500h18v8l-9 5-9-5z" fill="#fff" />
              <path d="M1 11l12 7 12-7v13H1z" fill="#3bb0ef" />
            </Svg>
          </TaskApp>
          <TaskApp>
            <Svg s={26} vb="0 0 26 26">
              <circle cx="13" cy="14" r="11.500" fill="#f3592e" />
              <path d="M3 8c2-4 5-6 8-6 0 3 3 3 6 4 4 2 7 6 6 12L13 8z" fill="#ffb11e" />
              <path d="M15 0c3 2 5 4 5 8l-6-3z" fill="#ffd53d" />
              <circle cx="12.500" cy="14" r="5.500" fill="#6d3fc4" />
              <circle cx="13.500" cy="13" r="2.600" fill="#f7a12a" />
            </Svg>
          </TaskApp>
          <TaskApp $underline $active>
            <Svg s={26} vb="0 0 26 26">
              <rect x="15" y="1" width="8" height="25" rx="1" fill="#d9a51f" />
              <rect x="9" y="7" width="9" height="19" rx="1" fill="#f2c811" />
              <rect x="3" y="13" width="9" height="13" rx="1" fill="#f9e27a" />
            </Svg>
          </TaskApp>

          <Tray>
            <TraySlot $w={30}>
              <Svg s={24} vb="0 0 24 24">
                <circle cx="13" cy="12" r="11" fill="#f39a1f" />
                <path d="M3 6.500h20M1 10.500h18M5 14.500h18M2 18.500h16" stroke="#f7e9b0" strokeWidth="1.500" />
              </Svg>
            </TraySlot>
            <TrayText $w={38}>16°C</TrayText>
            <TrayText $w={41}>Haze</TrayText>
            <TraySpacer $w={13} />
            <TraySlot $w={32}><Svg s={14} vb="0 0 14 14"><path d="m1 10 6-6 6 6" stroke="#111" strokeWidth="1.200" /></Svg></TraySlot>
            <TraySlot $w={33}><Svg s={16} vb="0 0 16 16"><path d="M3 3h7v10H3zM10 7l3.500-2v6L10 9M3 1h6M3 15h6" stroke="#111" /></Svg></TraySlot>
            <TraySlot $w={31}>
              <Svg s={20} vb="0 0 20 20"><path d="M2 4l13-2v16H2zM6 11l2 2 3-5" stroke="#111" /><circle cx="14" cy="15" r="3.400" fill="#f07b12" /></Svg>
            </TraySlot>
            <TraySlot $w={32}><Svg s={18} vb="0 0 18 18"><path d="M5 6h11v8H5zM16 8.500h1.500v3H16M1 10h4M2.500 5v4M4 5v4" stroke="#111" /><path d="M6.500 7.500h8v5h-8z" fill="#111" /></Svg></TraySlot>
            <TraySlot $w={32}><Svg s={18} vb="0 0 18 18"><circle cx="8.500" cy="8.500" r="7.500" stroke="#111" /><path d="M1 8.500h15M8.500 1c-4 4-4 11 0 15M8.500 1c4 4 4 11 0 15" stroke="#111" /><circle cx="14" cy="14" r="3" fill="#fff" stroke="#111" /></Svg></TraySlot>
            <TraySlot $w={31}><Svg s={18} vb="0 0 18 18"><path d="M1 6.500h3L8 3v12l-4-3.500H1zM11 6.500c1 1.500 1 3.500 0 5M13.500 4.500c2 3 2 6 0 9" stroke="#111" /></Svg></TraySlot>
            <TraySlot $w={38} $pl={4}><Svg s={20} vb="0 0 20 20"><path d="M3 17c-2-3 6-12 10-14 2-1 4 1 3 3-2 4-7 9-9 9-2 0-1-3 1-5l6-6M15 12c1 1 1 3-1 4" stroke="#111" /></Svg></TraySlot>
            <TrayText $w={40}>ENG</TrayText>
            <Clock>
              <span>22:14</span>
              <span>23-01-2024</span>
            </Clock>
            <NotifySlot>
              <Svg s={18} vb="0 0 18 18"><path d="M1 1h16v12H9l-3 4v-4H1z" fill="#111" /><path d="M4 4.500h10M4 7h10M4 9.500h6" stroke="#fff" /></Svg>
              <NotifyBadge>2</NotifyBadge>
            </NotifySlot>
          </Tray>
        </Taskbar>
      </Shell>
    </>
  );
};

/* ---------- shell ---------- */

const Shell = styled.div`
  width: 1366px;
  height: 768px;
  display: flex;
  flex-direction: column;
  overflow: hidden;
`;

const TitleBar = styled.header`
  height: 34px;
  flex: none;
  background: #3b3a39;
  display: flex;
  align-items: center;
  color: #fff;
`;

const TitleLeft = styled.div`
  width: 678px;
  display: flex;
  align-items: center;
  padding-left: 17px;
`;

const TitleGhost = styled.div`
  margin-left: 14px;
`;

const DocTitle = styled.span`
  margin-left: 9px;
  font-size: 12px;
  font-weight: 500;
  letter-spacing: -0.25px;
  white-space: nowrap;
  color: #fff;
`;

const TitleCaret = styled.span`
  margin-left: 6px;
  margin-bottom: 4px;
  border-left: 4.5px solid transparent;
  border-right: 4.5px solid transparent;
  border-top: 5px solid #fff;
`;

const TitleSearch = styled.div`
  width: 400px;
  height: 24px;
  background: #d2d0ce;
  border-radius: 2px;
  display: flex;
  align-items: center;
  gap: 12px;
  padding-left: 17px;
  font-size: 12.5px;
  color: #2b5c58;
`;

const TitleRight = styled.div`
  display: flex;
  align-items: center;
  margin-left: 75px;
`;

const SignIn = styled.span`
  font-size: 12px;
  width: 46px;
  letter-spacing: -0.2px;
`;

const WinButton = styled.div<{ $ml: number }>`
  margin-left: ${(p) => p.$ml}px;
`;

const Ribbon = styled.section`
  height: 126px;
  flex: none;
  background: #fdfdfd;
  box-shadow: 0 2px 4px rgba(0, 0, 0, 0.12);
  position: relative;
  z-index: 2;
`;

const TabsRow = styled.nav`
  height: 34px;
  display: flex;
  align-items: flex-start;
`;

const Tab = styled.div<{ $w: number; $ml: number; $active?: boolean }>`
  width: ${(p) => p.$w}px;
  margin-left: ${(p) => p.$ml}px;
  height: 31px;
  text-align: center;
  font-size: 13.5px;
  line-height: 32px;
  letter-spacing: -0.2px;
  font-weight: ${(p) => (p.$active ? 600 : 400)};
  color: #252423;
  border-bottom: ${(p) => (p.$active ? `3px solid ${GREEN}` : 'none')};
`;

const ShareButton = styled.button`
  margin-left: auto;
  margin-right: 6px;
  margin-top: 5px;
  width: 84px;
  height: 23px;
  border: none;
  border-radius: 3px;
  background: ${GREEN};
  color: #fff;
  font-family: ${FONT};
  font-size: 12px;
  letter-spacing: -0.2px;
  display: flex;
  align-items: center;
  gap: 5px;
  padding: 0 0 0 6px;
`;

const Groups = styled.div`
  height: 92px;
  display: flex;
  padding-top: 3px;
  position: relative;
`;

const RibbonGroup = styled.div<{ $w: number; $pl: number }>`
  width: ${(p) => p.$w}px;
  padding-left: ${(p) => p.$pl}px;
  height: 88px;
  border-right: 1px solid #dcdad8;
  display: flex;
  flex-direction: column;
`;

const GroupItems = styled.div`
  height: 76px;
  display: flex;
`;

const GroupLabel = styled.div<{ $pl: number }>`
  margin-left: ${(p) => -p.$pl}px;
  text-align: center;
  font-size: 10px;
  letter-spacing: -0.2px;
  line-height: 13px;
  color: #605e5c;
`;

const PasteButton = styled.div`
  width: 50px;
  padding-top: 5px;
  padding-left: 12px;
  display: flex;
  flex-direction: column;
  gap: 1px;
  font-size: 11.5px;
  letter-spacing: -0.3px;
  color: #b3b0ad;
  span {
    margin-left: 2px;
  }
`;

const ClipList = styled.div`
  display: flex;
  flex-direction: column;
  gap: 6px;
  margin-top: 2px;
  margin-left: 2px;
`;

const ClipRow = styled.div`
  height: 18px;
  display: flex;
  align-items: center;
  gap: 4px;
  font-size: 11.5px;
  letter-spacing: -0.2px;
  color: #b3b0ad;
  white-space: nowrap;
`;

const RibbonItem = styled.div<{ $w: number; $off?: boolean }>`
  width: ${(p) => p.$w}px;
  display: flex;
  flex-direction: column;
  align-items: center;
  padding-top: 5px;
  color: ${(p) => (p.$off ? '#c0bebc' : '#605e5c')};
`;

const ItemLabel = styled.div`
  display: flex;
  flex-direction: column;
  align-items: center;
  font-size: 11.5px;
  line-height: 17px;
  letter-spacing: -0.35px;
  white-space: nowrap;
  span {
    min-height: 17px;
    display: flex;
    align-items: center;
  }
`;

const Collapse = styled.div`
  position: absolute;
  right: 5px;
  bottom: 6px;
`;

const Main = styled.main`
  flex: 1;
  min-height: 0;
  display: flex;
`;

const NavRail = styled.aside`
  width: 42px;
  flex: none;
  background: #f3f2f1;
  border-right: 1px solid #e1dfdd;
  display: flex;
  flex-direction: column;
`;

const NavItem = styled.div<{ $active?: boolean }>`
  height: 40px;
  display: flex;
  align-items: center;
  justify-content: center;
  border-left: 3px solid ${(p) => (p.$active ? GREEN : 'transparent')};
  padding-right: 3px;
`;

const Center = styled.div`
  width: 963px;
  flex: none;
  display: flex;
  flex-direction: column;
`;

const Workspace = styled.div`
  height: 508px;
  flex: none;
  display: flex;
`;

const Canvas = styled.div`
  width: 762px;
  background: #fff;
  border-right: 1px solid #a19f9d;
`;

const ReportPage = styled.div`
  height: 431px;
  border-bottom: 2px dotted #555;
  padding: 35px 0 0 217px;
`;

const TableVisual = styled.div`
  display: flex;
  align-items: flex-start;
`;

const Table = styled.div`
  width: 348px;
  font-size: 13.2px;
  padding-top: 1px;
`;

const COLS = '79px 104px 102px 63px';

const HeaderRow = styled.div`
  height: 16px;
  display: grid;
  grid-template-columns: ${COLS};
  border-bottom: 1px solid #a7d1fb;
`;

const HeadCell = styled.div`
  font-size: 8px;
  line-height: 9px;
  padding-left: 2px;
  color: #605e5c;
  letter-spacing: -0.05px;
  white-space: nowrap;
  &:nth-child(4) {
    padding-left: 0;
  }
  &:nth-child(3) {
    padding-left: 3px;
  }
`;

const TableBody = styled.div`
  height: 336px;
  overflow: hidden;
`;

const DataRow = styled.div<{ $odd: boolean }>`
  height: 20.8px;
  display: grid;
  grid-template-columns: ${COLS};
  background: ${(p) => (p.$odd ? '#eeeeee' : '#fff')};
  color: #252423;
`;

const NameCell = styled.div`
  padding: 1px 0 0 3px;
  font-size: 13.5px;
  line-height: 21px;
  white-space: nowrap;
  overflow: hidden;
`;

const SalesCell = styled.div<{ $bg: string }>`
  background: ${(p) => p.$bg};
  text-align: right;
  padding: 1px 3px 0 0;
  line-height: 21px;
`;

const ProfitCell = styled.div<{ $fg: string }>`
  display: flex;
  align-items: center;
  justify-content: space-between;
  padding: 0 6px 0 2px;
  color: ${(p) => p.$fg};
  span {
    padding-top: 1px;
  }
`;

const DiscountCell = styled.div`
  position: relative;
  text-align: right;
  padding: 1px 5px 0 0;
  line-height: 21px;
`;

const DiscountBar = styled.div`
  position: absolute;
  left: 0;
  top: 0;
  bottom: 1px;
  background: #118dff;
`;

const DiscountValue = styled.span`
  position: relative;
`;

const TotalRow = styled.div`
  height: 24px;
  display: grid;
  grid-template-columns: ${COLS};
  border-top: 1px solid #69b4ff;
`;

const TotalCell = styled.div<{ $left?: boolean }>`
  font-weight: 700;
  font-size: 13.2px;
  letter-spacing: ${(p) => (p.$left ? '0' : '0.5px')};
  line-height: 23px;
  white-space: nowrap;
  text-align: ${(p) => (p.$left ? 'left' : 'right')};
  padding: ${(p) => (p.$left ? '0 0 0 3px' : '0 4px 0 0')};
  color: #252423;
`;

const ScrollBar = styled.div`
  width: 4px;
  height: 354px;
  margin-left: 3px;
  background: #b3b3b3;
`;

/* ---------- filters ---------- */

const FiltersPanel = styled.div`
  width: 201px;
  background: #fff;
  border-right: 1px solid #e1dfdd;
`;

const PanelHead = styled.div`
  height: 38px;
  display: flex;
  align-items: center;
  padding: 0 9px 0 11px;
`;

const FilterTitle = styled.div`
  margin-left: 8px;
  font-size: 14.5px;
  font-weight: 600;
  color: #252423;
`;

const HeadIcons = styled.div`
  margin-left: auto;
  display: flex;
  align-items: center;
  gap: 14px;
`;

const FilterSearch = styled.div`
  margin: 7px 0 0 8px;
  width: 180px;
  height: 31px;
  border: 1px solid #b3b0ad;
  border-radius: 2px;
  display: flex;
  align-items: center;
  gap: 13px;
  padding-left: 10px;
  font-size: 12px;
  color: #323130;
`;

const FilterDivider = styled.div`
  margin-top: 4px;
  height: 1px;
  background: #b3b0ad;
`;

const FilterSection = styled.section`
  padding: 16px 8px 0 8px;
  & + & {
    padding-top: 26px;
  }
`;

const FilterLabel = styled.div`
  display: flex;
  justify-content: space-between;
  align-items: center;
  height: 17px;
  font-size: 11.5px;
  letter-spacing: -0.15px;
  color: #323130;
`;

const Dots = styled.span`
  font-size: 14px;
  margin-right: 3px;
  letter-spacing: 0.5px;
  color: #605e5c;
`;

const DropBox = styled.div`
  margin-top: 8px;
  height: 46px;
  border: 1px solid #c8c6c4;
  border-radius: 2px;
  display: flex;
  align-items: center;
  justify-content: center;
  font-size: 11.5px;
  letter-spacing: -0.15px;
  color: #323130;
`;

/* ---------- page tabs ---------- */

const PageTabs = styled.div`
  height: 35px;
  flex: none;
  display: flex;
  align-items: stretch;
  background: #f3f2f1;
`;

const ViewIcon = styled.div<{ $active?: boolean }>`
  width: 24px;
  margin-left: ${(p) => (p.$active ? 9 : 21)}px;
  display: flex;
  justify-content: center;
  padding-top: 5px;
  border-bottom: 3px solid ${(p) => (p.$active ? GREEN : 'transparent')};
  height: 31px;
`;

const PageArrows = styled.div`
  margin: 0 5px 0 12px;
  width: 32px;
  display: flex;
  align-items: center;
  justify-content: space-between;
`;

const PageTab = styled.div`
  width: 75px;
  height: 35px;
  background: #fff;
  border-bottom: 4px solid ${GREEN};
  border-left: 1px solid #e1dfdd;
  text-align: center;
  font-size: 12px;
  line-height: 34px;
  letter-spacing: -0.2px;
  color: #252423;
`;

const AddPage = styled.div`
  width: 40px;
  margin-top: 2px;
  margin-bottom: 1px;
  background: ${GREEN};
  display: flex;
  align-items: center;
  justify-content: center;
`;

/* ---------- viz panel ---------- */

const VizPanel = styled.aside`
  width: 181px;
  flex: none;
  background: #f3f2f1;
  border-right: 1px solid #e1dfdd;
  display: flex;
  flex-direction: column;
`;

const PaneTitle = styled.div`
  height: 38px;
  padding: 0 7px 0 8px;
  display: flex;
  align-items: center;
  justify-content: space-between;
  font-size: 15px;
  font-weight: 600;
  color: #252423;
  letter-spacing: -0.1px;
`;

const BuildLabel = styled.div`
  margin: 0 0 0 8px;
  font-size: 11px;
  font-weight: 600;
  letter-spacing: -0.1px;
  height: 19px;
  line-height: 15px;
  color: #252423;
`;

const BuildTabs = styled.div`
  display: flex;
  padding-left: 8px;
  height: 44px;
`;

const BuildTab = styled.div<{ $active?: boolean }>`
  width: 32px;
  height: 32px;
  margin-right: 34px;
  border-radius: 2px;
  background: ${(p) => (p.$active ? '#d2d0ce' : 'transparent')};
  display: flex;
  align-items: center;
  justify-content: center;
`;

const NotchLine = styled.div`
  height: 1px;
  background: #a19f9d;
  position: relative;
  &::after {
    content: '';
    position: absolute;
    left: 19px;
    top: -5px;
    width: 9px;
    height: 9px;
    background: #f3f2f1;
    border-left: 1px solid #a19f9d;
    border-top: 1px solid #a19f9d;
    transform: rotate(45deg);
  }
`;

const VizGrid = styled.div`
  margin-top: 6px;
  padding-left: 6px;
  display: grid;
  grid-template-columns: repeat(6, 28px);
  grid-auto-rows: 28px;
`;

const VizCell = styled.div`
  display: flex;
  align-items: center;
  justify-content: center;
`;

const VizDivider = styled.div`
  margin-top: 4px;
  height: 1px;
  background: #e1dfdd;
`;

const WellLabel = styled.div`
  margin: 9px 0 0 12px;
  height: 21px;
  font-size: 11.5px;
  letter-spacing: -0.15px;
  color: #323130;
`;

const DashedBox = styled.div<{ $h: number; $pl: number; $mt?: number }>`
  margin: ${(p) => p.$mt ?? 0}px 0 0 4px;
  width: 170px;
  height: ${(p) => p.$h}px;
  border: 1px dashed #c8c6c4;
  border-radius: 2px;
  background: #fff;
  padding-left: ${(p) => p.$pl}px;
  font-size: 11.5px;
  letter-spacing: -0.15px;
  line-height: 26px;
  white-space: nowrap;
  color: #323130;
`;

const DrillLabel = styled.div`
  margin: 12px 0 0 12px;
  height: 19px;
  font-size: 11.5px;
  font-weight: 600;
  letter-spacing: -0.2px;
  color: #484644;
`;

const ToggleRow = styled.div`
  height: 27px;
  display: flex;
  align-items: center;
  justify-content: space-between;
  padding: 0 22px 0 12px;
  font-size: 11.5px;
  letter-spacing: -0.2px;
  color: #323130;
`;

const ToggleOff = styled.div`
  width: 32px;
  height: 16px;
  border-radius: 8px;
  border: 1px solid #605e5c;
  background: #fff;
  display: flex;
  align-items: center;
  gap: 2px;
  padding-left: 4px;
  font-size: 9px;
  color: #605e5c;
`;

const ToggleOn = styled.div`
  width: 32px;
  height: 16px;
  border-radius: 8px;
  background: ${GREEN};
  display: flex;
  align-items: center;
  justify-content: space-between;
  padding: 0 4px 0 5px;
  font-size: 9px;
  font-weight: 600;
  color: #fff;
`;

const Knob = styled.span<{ $dark?: boolean }>`
  width: 8px;
  height: 8px;
  border-radius: 50%;
  background: ${(p) => (p.$dark ? '#605e5c' : '#fff')};
`;

const DataPanel = styled.aside`
  flex: 1;
  background: #f3f2f1;
  display: flex;
  flex-direction: column;
`;

const DataSearch = styled.div`
  margin: 7px 4px 0 4px;
  height: 27px;
  border: 1px solid #8a8886;
  border-radius: 1px;
  background: #fff;
  display: flex;
  align-items: center;
  gap: 5px;
  padding: 1px 0 0 6px;
  font-size: 12.5px;
  color: #323130;
`;

const TreeRow = styled.div`
  margin: 12px 0 0 7px;
  height: 18px;
  display: flex;
  align-items: center;
  gap: 5px;
  font-size: 11.5px;
  letter-spacing: -0.15px;
  color: #484644;
`;

/* ---------- status + taskbar ---------- */

const StatusBar = styled.footer`
  height: 24px;
  flex: none;
  background: #f3f2f1;
  border-top: 1px solid #e1dfdd;
  display: flex;
  align-items: center;
  justify-content: space-between;
  padding: 0 18px 0 4px;
  font-size: 11px;
  color: #605e5c;
`;

const ZoomArea = styled.div`
  display: flex;
  align-items: center;
`;

const ZoomSign = styled.span`
  width: 10px;
  text-align: center;
  font-size: 14px;
  line-height: 14px;
  color: #484644;
`;

const ZoomTrack = styled.div`
  width: 100px;
  height: 1px;
  margin: 0 5px 0 1px;
  background: #605e5c;
  position: relative;
`;

const ZoomTick = styled.span`
  position: absolute;
  left: 50px;
  top: -3px;
  width: 1px;
  height: 7px;
  background: #605e5c;
`;

const ZoomThumb = styled.span`
  position: absolute;
  left: 26px;
  top: -6px;
  width: 4px;
  height: 13px;
  background: #605e5c;
`;

const ZoomValue = styled.span`
  margin: 0 19px 0 13px;
  font-size: 11.5px;
  letter-spacing: -0.2px;
`;

const Taskbar = styled.footer`
  height: 41px;
  flex: none;
  border-top: 2px solid #111;
  background: linear-gradient(90deg, #cbe4ef 0%, #cfe2ec 50%, #d4dbe8 100%);
  display: flex;
  align-items: stretch;
`;

const StartButton = styled.div`
  width: 48px;
  display: flex;
  align-items: center;
  justify-content: center;
`;

const TaskSearch = styled.div`
  width: 288px;
  background: #fff;
  border: 1px solid #c5c5c5;
  border-top: none;
  display: flex;
  align-items: center;
  gap: 10px;
  padding-left: 11px;
  font-size: 14px;
  letter-spacing: -0.05px;
  color: #252423;
`;

const TaskApp = styled.div<{ $underline?: boolean; $active?: boolean }>`
  width: 44px;
  margin: 0 2.5px;
  display: flex;
  align-items: center;
  justify-content: center;
  background: ${(p) => (p.$active ? '#f3f8fb' : 'transparent')};
  border-bottom: 2px solid ${(p) => (p.$underline ? '#0f6cbd' : 'transparent')};
`;

const Tray = styled.div`
  margin-left: auto;
  display: flex;
  align-items: center;
  padding-right: 10px;
  font-size: 12.5px;
  color: #111;
`;

const TraySlot = styled.div<{ $w: number; $pl?: number }>`
  width: ${(p) => p.$w}px;
  padding-left: ${(p) => p.$pl ?? 0}px;
  display: flex;
  justify-content: center;
`;

const TrayText = styled.div<{ $w: number }>`
  width: ${(p) => p.$w}px;
  text-align: center;
  letter-spacing: -0.2px;
  white-space: nowrap;
`;

const TraySpacer = styled.div<{ $w: number }>`
  width: ${(p) => p.$w}px;
`;

const Clock = styled.div`
  width: 68px;
  display: flex;
  flex-direction: column;
  align-items: center;
  gap: 1px;
  font-size: 11.5px;
  line-height: 17px;
  letter-spacing: -0.25px;
`;

const NotifySlot = styled.div`
  width: 44px;
  display: flex;
  justify-content: center;
  position: relative;
`;

const NotifyBadge = styled.span`
  position: absolute;
  left: 22px;
  top: 6px;
  width: 17px;
  height: 17px;
  border-radius: 50%;
  background: #c8c8c8;
  border: 1px solid #777;
  text-align: center;
  font-size: 11px;
  line-height: 15px;
`;

export default App;
